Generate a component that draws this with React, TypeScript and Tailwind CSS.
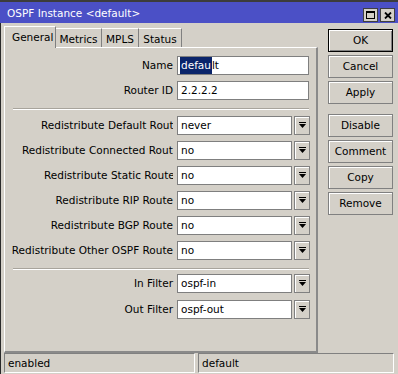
import React from "react";

type Row = { label: string; value: string; clip?: string };

const redistribute: Row[] = [
  { label: "Redistribute Default Route", value: "never", clip: "w-[132px]" },
  { label: "Redistribute Connected Route", value: "no", clip: "w-[151px]" },
  { label: "Redistribute Static Route", value: "no", clip: "w-[129px]" },
  { label: "Redistribute RIP Route", value: "no" },
  { label: "Redistribute BGP Route", value: "no" },
  { label: "Redistribute Other OSPF Route", value: "no" },
];

const bevel = "border border-[#808080] shadow-[inset_1px_1px_0_#ffffff]";

const Label = ({ text, clip }: { text: string; clip?: string }) => (
  <div className="w-[168px] flex justify-end shrink-0">
    {clip ? (
      <span className={`block overflow-hidden whitespace-nowrap ${clip}`}>{text}</span>
    ) : (
      <span className="whitespace-nowrap">{text}</span>
    )}
  </div>
);

const DropArrow = () => (
  <svg width="7" height="7" viewBox="0 0 7 7">
    <rect x="0" y="0" width="7" height="1" fill="#000" />
    <path d="M0 2h7L3.5 6z" fill="#000" />
  </svg>
);

const Select = ({ label, value, clip, className = "" }: Row & { className?: string }) => (
  <div className={`flex items-center h-[19px] ${className}`}>
    <Label text={label} clip={clip} />
    <div className="ml-[4px] w-[115px] h-[19px] bg-white border border-[#7f7f7f] flex items-center pl-[3px]">
      {value}
    </div>
    <div className={`ml-[2px] w-[16px] h-[19px] bg-[#d4d0c8] flex items-center justify-center ${bevel}`}>
      <DropArrow />
    </div>
  </div>
);

const Separator = ({ className = "" }: { className?: string }) => (
  <div className={`ml-[8px] w-[296px] border-t border-[#a8a49c] border-b border-b-white ${className}`} />
);

const Button = ({ children, primary, className = "" }: { children: React.ReactNode; primary?: boolean; className?: string }) => (
  <div
    className={`h-[23px] w-[65px] flex items-center justify-center bg-[#d4d0c8] ${
      primary ? "border border-black shadow-[inset_1px_1px_0_#ffffff,inset_-1px_-1px_0_#808080]" : bevel
    } ${className}`}
  >
    {children}
  </div>
);

export default function App() {
  return (
    <div className="w-[398px] h-[374px] overflow-hidden bg-[#d4d0c8] text-black font-['DejaVu_Sans',sans-serif] text-[10.5px] leading-none flex flex-col">
      {/* title bar */}
      <div className="border-t-2 border-[#3c3c3c] h-[23px] shrink-0">
        <div className="h-[21px] bg-[#4b50c6] flex items-center justify-between">
          <span className="pl-[7px] pt-[2px] text-white">OSPF Instance &lt;default&gt;</span>
          <div className="flex gap-[2px] self-end mb-[1px] mr-[3px]">
            <div className="w-[15px] h-[14px] bg-[#d4d0c8] border border-[#404040] flex items-center justify-center">
              <svg width="9" height="8" viewBox="0 0 9 8">
                <rect x="0.5" y="0.5" width="8" height="7" fill="none" stroke="#000" />
                <rect x="0" y="0" width="9" height="2" fill="#000" />
              </svg>
            </div>
            <div className="w-[15px] h-[14px] bg-[#d4d0c8] border border-[#404040] flex items-center justify-center">
              <svg width="8" height="7" viewBox="0 0 8 7">
                <path d="M1 0.5L7 6.5M7 0.5L1 6.5" stroke="#000" strokeWidth="1.8" />
              </svg>
            </div>
          </div>
        </div>
      </div>

      {/* body */}
      <div className="flex-1 flex flex-col border-l border-[#2a2a2a]">
        <div className="flex h-[330px]">
          <div className="ml-[3px] mt-[3px] w-[314px] flex flex-col">
            <div className="flex items-end h-[21px]">
              <div className="relative z-10 -mb-px h-[22px] w-[52px] bg-[#d4d0c8] border-t border-l border-white border-r border-r-[#808080] flex items-center pl-[7px]">
                General
              </div>
              <div className="h-[19px] w-[46px] border-t border-white border-r border-r-[#808080] flex items-center justify-center pt-[2px]">
                Metrics
              </div>
              <div className="h-[19px] w-[37px] border-t border-white border-r border-r-[#808080] flex items-center justify-center pt-[2px]">
                MPLS
              </div>
              <div className="h-[19px] w-[43px] border-t border-white border-r border-r-[#808080] flex items-center justify-center pt-[2px]">
                Status
              </div>
            </div>
            <div className="h-[306px] border-t border-l border-white border-r-2 border-b-2 border-r-[#8a8a8a] border-b-[#8a8a8a] pt-[8px] flex flex-col">
              <div className="flex items-center h-[19px]">
                <Label text="Name" />
                <div className="ml-[4px] w-[132px] h-[19px] bg-white border border-[#7f7f7f] flex items-center pl-[2px]">
                  <span className="bg-[#0a246a] text-white px-px py-[3px]">defau</span>
                  <span>lt</span>
                </div>
              </div>
              <div className="flex items-center h-[19px] mt-[6px]">
                <Label text="Router ID" />
                <div className="ml-[4px] w-[132px] h-[19px] bg-white border border-[#7f7f7f] flex items-center pl-[3px]">
                  2.2.2.2
                </div>
              </div>
              <Separator className="mt-[8px] mb-[6px]" />
              <div className="flex flex-col gap-[6px]">
                {redistribute.map((r) => (
                  <Select key={r.label} {...r} />
                ))}
              </div>
              <Separator className="mt-[8px] mb-[4px]" />
              <Select label="In Filter" value="ospf-in" />
              <Select label="Out Filter" value="ospf-out" className="mt-[7px]" />
            </div>
          </div>

          <div className="ml-[10px] mt-[6px] flex flex-col">
            <Button primary>OK</Button>
            <Button className="mt-[3px]">Cancel</Button>
            <Button className="mt-[3px]">Apply</Button>
            <Button className="mt-[10px]">Disable</Button>
            <Button className="mt-[3px]">Comment</Button>
            <Button className="mt-[3px]">Copy</Button>
            <Button className="mt-[3px]">Remove</Button>
          </div>
        </div>

        {/* status bar */}
        <div className="flex ml-[3px] gap-[3px] h-[20px]">
          <div className="w-[191px] border-t border-l border-[#808080] border-b border-r border-b-white border-r-white flex items-center pl-[3px]">
            enabled
          </div>
          <div className="w-[196px] border-t border-l border-[#808080] border-b border-r border-b-white border-r-white flex items-center pl-[3px]">
            default
          </div>
        </div>
      </div>
    </div>
  );
}
